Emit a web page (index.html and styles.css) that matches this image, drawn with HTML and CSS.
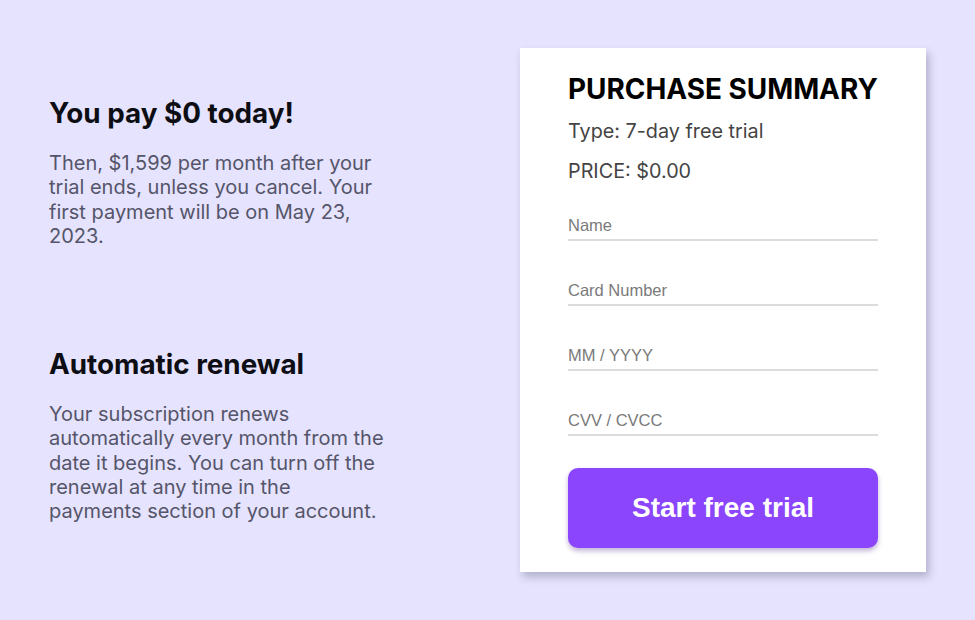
FILE: index.html
```html
<!DOCTYPE html>
<html lang="en">
<head>
    <meta charset="UTF-8">
    <title>Purchase Summary</title>
    <link rel="stylesheet" href="styles.css">
</head>
<body>

    <div class="page">
        <div class="info">
            <div class="info-block">
                <h2>You pay $0 today!</h2>
                <p>Then, $1,599 per month after your trial ends, unless you cancel. Your first payment will be on May 23, 2023.</p>
            </div>
            <div class="info-block">
                <h2>Automatic renewal</h2>
                <p>Your subscription renews automatically every month from the date it begins. You can turn off the renewal at any time in the payments section of your account.</p>
            </div>
        </div>

        <div class="summary-card">
            <h1>PURCHASE SUMMARY</h1>
            <p class="summary-line">Type: 7-day free trial</p>
            <p class="summary-line">PRICE: $0.00</p>

            <form class="pay-form">
                <input class="field" type="text" placeholder="Name">
                <input class="field" type="text" placeholder="Card Number">
                <input class="field" type="text" placeholder="MM / YYYY">
                <input class="field" type="text" placeholder="CVV / CVCC">
                <button class="start-btn" type="button">Start free trial</button>
            </form>
        </div>
    </div>

</body>
</html>
```

FILE: styles.css
```css
body {
    margin: 0;
    background-color: #e5e3fd;
    font-family: Inter, "Noto Sans", sans-serif;
}

.page {
    display: flex;
    align-items: flex-start;
    padding: 48px 0 0 49px;
}

.info {
    width: 337px;
    padding-top: 47px;
    margin-right: 134px;
}

.info-block {
    margin-bottom: 98px;
}

.info h2 {
    margin: 0 0 20px;
    font-size: 27.8px;
    font-weight: 700;
    color: #0d0d14;
    line-height: 36px;
}

.info p {
    margin: 0;
    font-size: 20px;
    line-height: 24.3px;
    color: #55556a;
}

.summary-card {
    width: 310px;
    padding: 24px 48px;
    background-color: #fff;
    box-shadow: 3px 5px 8px rgba(60, 60, 90, 0.3);
}

.summary-card h1 {
    margin: 0 0 5px;
    font-size: 27.9px;
    font-weight: 700;
    color: #000;
    line-height: 34px;
}

.summary-line {
    margin: 0;
    font-size: 19.8px;
    line-height: 40px;
    color: #444;
}

.pay-form {
    display: flex;
    flex-direction: column;
    margin-top: 20px;
}

.field {
    box-sizing: border-box;
    height: 30px;
    padding: 0;
    margin-bottom: 35px;
    border: none;
    border-bottom: 2px solid #dcdcdc;
    font-family: "Liberation Sans", Arial, sans-serif;
    font-size: 16.5px;
    color: #333;
    outline: none;
}

.field::placeholder {
    color: #7a7a7a;
}

.start-btn {
    margin-top: -3px;
    height: 80px;
    border: none;
    border-radius: 10px;
    background-color: #8a45fd;
    color: #fff;
    font-family: "Liberation Sans", Arial, sans-serif;
    font-size: 28px;
    font-weight: 700;
    box-shadow: 0 3px 5px rgba(80, 40, 140, 0.35);
}
```
